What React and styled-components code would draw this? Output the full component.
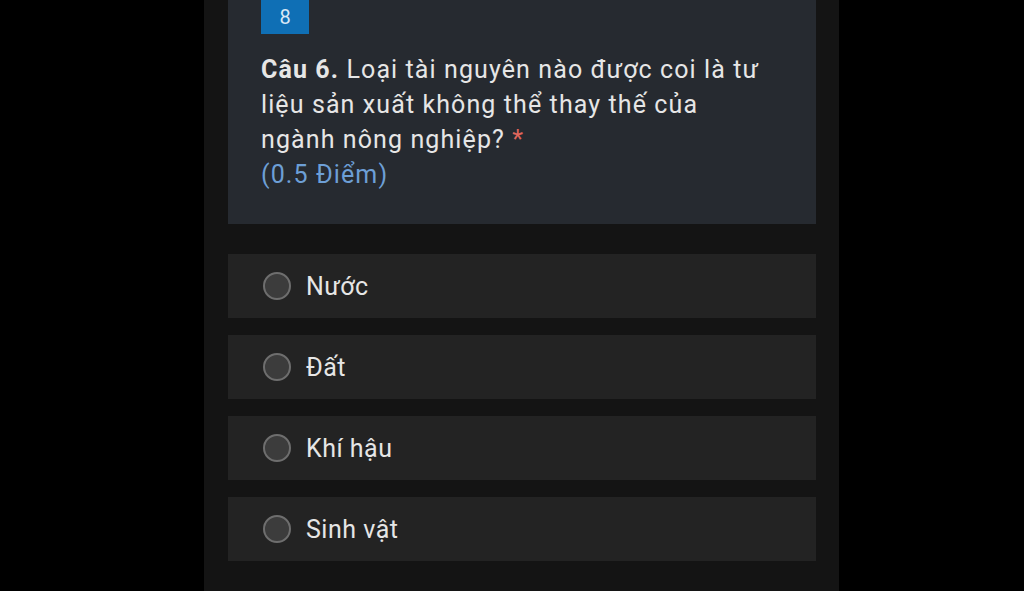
import React from "react";
import styled, { createGlobalStyle } from "styled-components";

const Global = createGlobalStyle`
  html, body { margin: 0; padding: 0; background: #000; }
  body { font-family: Roboto, "Noto Sans", sans-serif; }
`;

const Page = styled.div`
  width: 1024px;
  height: 591px;
  overflow: hidden;
  background: #000;
  padding-left: 204px;
  box-sizing: border-box;
`;

const Column = styled.div`
  width: 635px;
  height: 591px;
  background: #141414;
  padding: 0 23px 0 24px;
  box-sizing: border-box;
  display: flex;
  flex-direction: column;
`;

const Card = styled.div`
  background: #262a30;
  padding: 0 33px 32px 33px;
  display: flex;
  flex-direction: column;
  align-items: flex-start;
`;

const Badge = styled.div`
  width: 48px;
  height: 34px;
  background: #0f6fb5;
  color: #d8e8f6;
  font-size: 20px;
  display: flex;
  align-items: center;
  justify-content: center;
  margin-bottom: 18px;
`;

const Question = styled.div`
  color: #e6e6e6;
  font-size: 25px;
  letter-spacing: 1.1px;
  line-height: 35px;
  width: 515px;
`;

const Strong = styled.b`
  font-weight: 700;
`;

const Star = styled.span`
  color: #e0665c;
`;

const Points = styled.div`
  color: #6d9fd6;
`;

const Options = styled.div`
  margin-top: 30px;
  display: flex;
  flex-direction: column;
  gap: 17px;
`;

const Option = styled.div`
  height: 64px;
  background: #232323;
  display: flex;
  align-items: center;
  padding-left: 35px;
  gap: 15px;
`;

const Radio = styled.span`
  width: 24px;
  height: 24px;
  border-radius: 50%;
  background: #3c3c3c;
  border: 2px solid #6e6e6e;
  flex-shrink: 0;
`;

const Label = styled.span`
  color: #e6e6e6;
  font-size: 25px;
  letter-spacing: 0.5px;
`;

const choices = ["Nước", "Đất", "Khí hậu", "Sinh vật"];

export default function App() {
  return (
    <Page>
      <Global />
      <Column>
        <Card>
          <Badge>8</Badge>
          <Question>
            <Strong>Câu 6.</Strong> Loại tài nguyên nào được coi là tư liệu sản xuất không thể thay thế của ngành nông nghiệp? <Star>*</Star>
            <Points>(0.5 Điểm)</Points>
          </Question>
        </Card>
        <Options>
          {choices.map((c) => (
            <Option key={c}>
              <Radio />
              <Label>{c}</Label>
            </Option>
          ))}
        </Options>
      </Column>
    </Page>
  );
}
